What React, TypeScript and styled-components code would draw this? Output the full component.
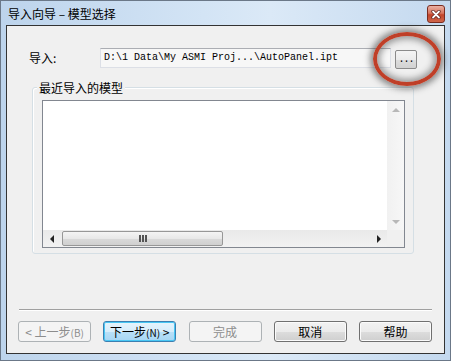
import React from 'react';
import styled, { createGlobalStyle, css } from 'styled-components';

const GlobalStyle = createGlobalStyle`
  html, body {
    margin: 0;
    padding: 0;
    background: #ffffff;
  }
  body {
    width: 451px;
    height: 361px;
    overflow: hidden;
    font-family: "Noto Sans CJK SC", "Noto Sans", sans-serif;
    font-size: 12px;
    color: #000;
  }
`;

const Window = styled.div`
  position: relative;
  box-sizing: border-box;
  width: 451px;
  height: 361px;
  border: 1px solid #6b7888;
  background: linear-gradient(90deg, #bdd4ec 0%, #d3e4f5 45%, #dbe9f7 60%, #c4d9ef 100%);
  display: flex;
  flex-direction: column;
  padding: 0 5px 6px 5px;
`;

const TitleBar = styled.div`
  height: 24px;
  display: flex;
  align-items: flex-start;
  justify-content: space-between;
`;

const TitleText = styled.div`
  padding: 4px 0 0 2px;
  font-size: 12px;
  line-height: 17px;
  color: #000;
`;

const CloseButton = styled.div`
  margin-top: 4px;
  box-sizing: border-box;
  width: 18px;
  height: 18px;
  border: 1px solid #7a2c20;
  border-radius: 3px;
  background: linear-gradient(180deg, #eab1a4 0%, #d7755f 45%, #c2452b 55%, #d0664a 100%);
  display: flex;
  align-items: center;
  justify-content: center;
`;

const Client = styled.div`
  flex: 1;
  border: 1px solid #333;
  background: #f0f0f0;
  display: flex;
  flex-direction: column;
  padding-top: 22px;
`;

const Row = styled.div`
  display: flex;
  align-items: flex-start;
  margin-left: 22px;
  height: 20px;
`;

const Label = styled.div`
  width: 71px;
  line-height: 20px;
`;

const PathField = styled.div`
  box-sizing: border-box;
  width: 291px;
  height: 20px;
  border: 1px solid #dcdfe6;
  border-top-color: #abadb3;
  background: #f7f7f7;
  font-family: "Liberation Mono", "DejaVu Sans Mono", monospace;
  font-size: 10px;
  line-height: 18px;
  padding-left: 3px;
  white-space: nowrap;
  overflow: hidden;
`;

const BrowseButton = styled.div`
  box-sizing: border-box;
  margin: 2px 0 0 4px;
  width: 22px;
  height: 19px;
  border: 1px solid #8a8a8a;
  border-radius: 2px;
  background: linear-gradient(180deg, #f4f4f4 0%, #ebebeb 50%, #dddddd 51%, #d2d2d2 100%);
  font-family: "Liberation Mono", monospace;
  font-size: 10px;
  line-height: 17px;
  text-align: center;
  letter-spacing: -1px;
`;

const Group = styled.div`
  position: relative;
  box-sizing: border-box;
  margin: 19px 0 0 25px;
  width: 382px;
  height: 167px;
  border: 1px solid #d5dfe5;
  border-radius: 3px;
  box-shadow: inset 1px 1px 0 #ffffff;
  padding: 12px 8px 5px 9px;
`;

const GroupLabel = styled.div`
  position: absolute;
  top: -9px;
  left: 4px;
  padding: 0 2px;
  background: #f0f0f0;
  line-height: 17px;
`;

const ListBox = styled.div`
  box-sizing: border-box;
  height: 100%;
  border: 1px solid #828790;
  background: #fff;
  display: grid;
  grid-template-columns: 1fr 17px;
  grid-template-rows: 1fr 17px;
`;

const VScroll = styled.div`
  background: linear-gradient(90deg, #f1f1f1, #f7f7f7);
  display: flex;
  flex-direction: column;
  justify-content: space-between;
`;

const HScroll = styled.div`
  background: linear-gradient(180deg, #e9e9e9, #f2f2f2);
  display: flex;
  align-items: center;
`;

const Corner = styled.div`
  background: #f0f0f0;
`;

const ArrowCell = styled.div<{ $w?: number }>`
  width: ${(p) => p.$w ?? 17}px;
  height: 17px;
  display: flex;
  align-items: center;
  justify-content: center;
  flex: none;
`;

const Thumb = styled.div`
  box-sizing: border-box;
  margin-left: 2px;
  width: 161px;
  height: 15px;
  border: 1px solid #979797;
  border-radius: 2px;
  background: linear-gradient(180deg, #f4f4f4 0%, #e8e8e8 50%, #d9d9d9 51%, #d0d0d0 100%);
  display: flex;
  align-items: center;
  justify-content: center;
`;

const Spacer = styled.div`
  flex: 1;
`;

const Separator = styled.div`
  margin: 55px 0 0 12px;
  width: 413px;
  border-top: 1px solid #a0a0a0;
  border-bottom: 1px solid #ffffff;
`;

const ButtonRow = styled.div`
  margin: 10px 0 0 11px;
  width: 414px;
  display: flex;
  justify-content: space-between;
`;

const Button = styled.div<{ $disabled?: boolean; $focus?: boolean }>`
  box-sizing: border-box;
  width: 73px;
  height: 21px;
  border: 1px solid #707070;
  border-radius: 3px;
  background: linear-gradient(180deg, #f2f2f2 0%, #ebebeb 50%, #dddddd 51%, #cfcfcf 100%);
  box-shadow: inset 0 0 0 1px #fbfbfb;
  text-align: center;
  line-height: 19px;
  font-size: 12px;
  color: #000;
  white-space: nowrap;
  ${(p) =>
    p.$disabled &&
    css`
      border-color: #adb2b5;
      background: #f4f4f4;
      box-shadow: none;
      color: #8d8d8d;
    `}
  ${(p) =>
    p.$focus &&
    css`
      border-color: #3c7fb1;
      background: linear-gradient(180deg, #e6f4fc 0%, #d6edfb 50%, #b9e0f8 51%, #a7d6f4 100%);
      box-shadow: inset 0 0 0 1px #48c7f4;
    `}
`;

const Small = styled.span`
  font-size: 10px;
`;

const Annotation = styled.div`
  position: absolute;
  left: 372px;
  top: 31px;
  width: 68px;
  height: 54px;
  box-sizing: border-box;
  border: 4px solid #bf3f28;
  border-radius: 50%;
  box-shadow: 0 0 6px 3px rgba(50, 50, 50, 0.55), inset 0 0 6px 3px rgba(50, 50, 50, 0.45);
  pointer-events: none;
`;

const Tri = ({ dir, color }: { dir: 'up' | 'down' | 'left' | 'right'; color: string }) => {
  const pts = {
    up: '0,4 4,0 8,4',
    down: '0,0 8,0 4,4',
    left: '4,0 4,8 0,4',
    right: '0,0 0,8 4,4',
  }[dir];
  const vertical = dir === 'up' || dir === 'down';
  return (
    <svg width={vertical ? 8 : 4} height={vertical ? 4 : 8}>
      <polygon points={pts} fill={color} />
    </svg>
  );
};

const Grip = () => (
  <svg width="8" height="7">
    <rect x="0" y="0" width="2" height="7" fill="#555" />
    <rect x="3" y="0" width="2" height="7" fill="#555" />
    <rect x="6" y="0" width="2" height="7" fill="#555" />
  </svg>
);

const App: React.FC = () => {
  return (
    <>
      <GlobalStyle />
      <Window>
        <TitleBar>
          <TitleText>导入向导 – 模型选择</TitleText>
          <CloseButton>
            <svg width="10" height="9" viewBox="0 0 10 9">
              <path d="M2 1.5 L8 7.5 M8 1.5 L2 7.5" stroke="#5a2018" strokeWidth="3.2" strokeLinecap="round" />
              <path d="M2 1.5 L8 7.5 M8 1.5 L2 7.5" stroke="#ffffff" strokeWidth="1.8" strokeLinecap="round" />
            </svg>
          </CloseButton>
        </TitleBar>
        <Client>
          <Row>
            <Label>导入:</Label>
            <PathField>D:\1 Data\My ASMI Proj...\AutoPanel.ipt</PathField>
            <BrowseButton>...</BrowseButton>
          </Row>
          <Group>
            <GroupLabel>最近导入的模型</GroupLabel>
            <ListBox>
              <div />
              <VScroll>
                <ArrowCell>
                  <Tri dir="up" color="#b8b8b8" />
                </ArrowCell>
                <ArrowCell>
                  <Tri dir="down" color="#b8b8b8" />
                </ArrowCell>
              </VScroll>
              <HScroll>
                <ArrowCell>
                  <Tri dir="left" color="#222" />
                </ArrowCell>
                <Thumb>
                  <Grip />
                </Thumb>
                <Spacer />
                <ArrowCell>
                  <Tri dir="right" color="#222" />
                </ArrowCell>
              </HScroll>
              <Corner />
            </ListBox>
          </Group>
          <Separator />
          <ButtonRow>
            <Button $disabled>
              &lt; 上一步<Small>(B)</Small>
            </Button>
            <Button $focus>
              下一步<Small>(N)</Small> &gt;
            </Button>
            <Button $disabled>完成</Button>
            <Button>取消</Button>
            <Button>帮助</Button>
          </ButtonRow>
        </Client>
        <Annotation />
      </Window>
    </>
  );
};

export default App;
